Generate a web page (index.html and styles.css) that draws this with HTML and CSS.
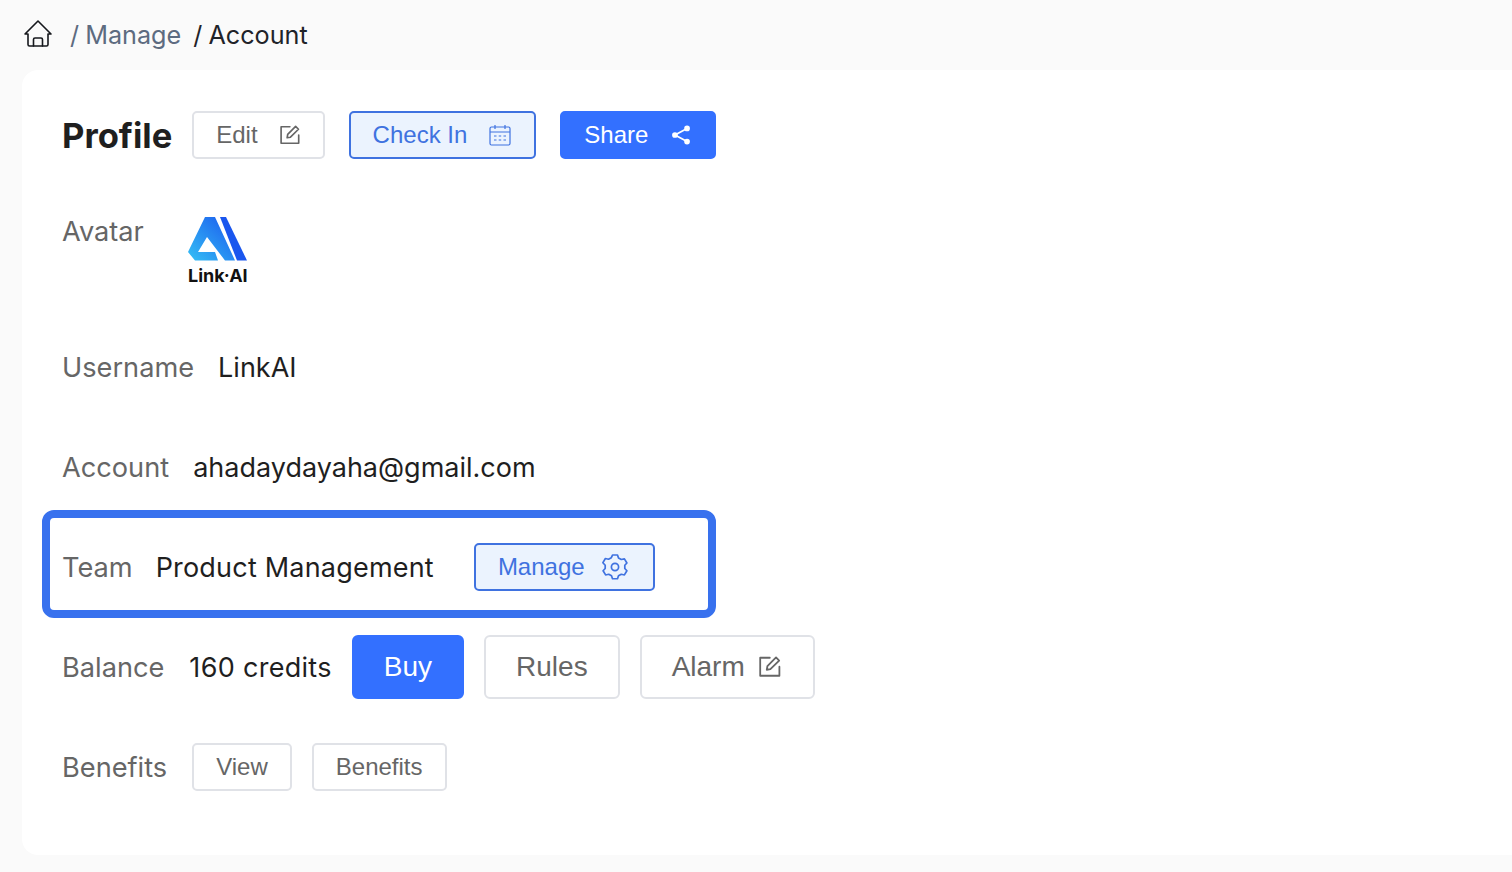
FILE: index.html
```html
<!DOCTYPE html>
<html lang="en">
<head>
  <meta charset="UTF-8">
  <title>Account</title>
  <link rel="stylesheet" href="styles.css">
</head>
<body>
  <!-- breadcrumb -->
  <nav class="crumbs">
    <svg class="home-icon" viewBox="0 0 28 28" fill="none" stroke="#16181d" stroke-width="1.6" stroke-linejoin="round" stroke-linecap="round">
      <path d="M1 14 14 1l13 13h-3v10.500a1.500 1.500 0 0 1-1.500 1.500h-17A1.500 1.500 0 0 1 4 24.500V14z"/>
      <path d="M9.500 26v-6.500a1.500 1.500 0 0 1 1.500-1.500h6a1.500 1.500 0 0 1 1.500 1.500V26"/>
    </svg>
    <span class="crumb">/ Manage</span>
    <span class="crumb current">/ Account</span>
  </nav>

  <main class="card">
    <div class="row head-row">
      <h1 class="title">Profile</h1>
      <button class="btn btn-line edit-btn">Edit
        <svg class="icon gap-lg" viewBox="1 0 20 20" fill="none" stroke="currentColor" stroke-width="1.5" stroke-linejoin="round" stroke-linecap="round">
          <path d="M10 2.500H2v15h16V10"/>
          <path d="M7.500 12.500 8 9.500 15.200 2.200l2.600 2.600-7.300 7.200z"/>
        </svg>
      </button>
      <button class="btn btn-soft checkin-btn">Check In
        <svg class="icon gap-lg" viewBox="0 0 22 22" fill="none" stroke="currentColor" stroke-width="1.2">
          <rect x="1" y="3" width="20" height="18" rx="1.5"/>
          <path d="M1 8h20M6 1v4M16 1v4"/>
          <path d="M5 12h2.500M9.700 12h2.500M14.500 12h2.500M5 16h2.500M9.700 16h2.500M14.500 16h2.500"/>
        </svg>
      </button>
      <button class="btn btn-solid">Share
        <svg class="icon gap-lg" viewBox="0 0 20 20" fill="currentColor" stroke="currentColor" stroke-width="1.6">
          <circle cx="15.500" cy="4" r="1.800"/>
          <circle cx="4.500" cy="10" r="1.800"/>
          <circle cx="15.500" cy="16" r="1.800"/>
          <path d="M15.500 4 4.500 10l11 6" fill="none"/>
        </svg>
      </button>
    </div>

    <div class="row avatar-row">
      <span class="label">Avatar</span>
      <div class="logo">
        <svg class="logo-mark" viewBox="0 0 60 44">
          <defs>
            <linearGradient id="lg" x1="0" y1="1" x2="1" y2="0">
              <stop offset="0" stop-color="#35c0f5"/>
              <stop offset="1" stop-color="#1a56ee"/>
            </linearGradient>
          </defs>
          <path fill="url(#lg)" d="M17 0h10l20 43.500H37L19 20 10 35h17l3 8.500H7L0 35z"/>
          <path fill="#1a56ee" d="M32 0h6l21 43.500H49z"/>
        </svg>
        <span class="logo-text">Link·AI</span>
      </div>
    </div>

    <div class="row">
      <span class="label">Username</span>
      <span class="value">LinkAI</span>
    </div>

    <div class="row">
      <span class="label">Account</span>
      <span class="value">ahadaydayaha@gmail.com</span>
    </div>

    <div class="row team-row">
      <span class="label">Team</span>
      <span class="value">Product Management</span>
      <button class="btn btn-soft team-btn">Manage
        <svg class="icon gap-sm" viewBox="0 0 26 26" fill="none" stroke="currentColor" stroke-width="1.700" stroke-linejoin="round">
          <path d="M10.500 1.800h5l1 3 2.800 1.600 3.100-.7 2.500 4.300-2.100 2.300v3.400l2.100 2.300-2.500 4.300-3.100-.7-2.800 1.600-1 3h-5l-1-3-2.800-1.600-3.100.7-2.500-4.300 2.100-2.300v-3.400L.9 9.700l2.500-4.300 3.100.7 2.800-1.600z" transform="translate(0 -.7) scale(1 .97)"/>
          <circle cx="13" cy="13" r="3.600"/>
        </svg>
      </button>
      <div class="tour-ring"></div>
    </div>

    <div class="row balance-row">
      <span class="label">Balance</span>
      <span class="value">160 credits</span>
      <button class="btn btn-solid btn-big buy">Buy</button>
      <button class="btn btn-line btn-big rules">Rules</button>
      <button class="btn btn-line btn-big alarm">Alarm
        <svg class="icon gap-xs" viewBox="1 .2 20 20" fill="none" stroke="currentColor" stroke-width="1.5" stroke-linejoin="round" stroke-linecap="round">
          <path d="M10 2.500H2v15h16V10"/>
          <path d="M7.500 12.500 8 9.500 15.200 2.200l2.600 2.600-7.300 7.200z"/>
        </svg>
      </button>
    </div>

    <div class="row benefits-row">
      <span class="label">Benefits</span>
      <button class="btn btn-line">View</button>
      <button class="btn btn-line">Benefits</button>
    </div>
  </main>
</body>
</html>
```

FILE: styles.css
```css
* { box-sizing: border-box; }
body {
  margin: 0;
  background: #fafafa;
  font-family: Inter, 'Liberation Sans', Arial, sans-serif;
  color: #1f1f1f;
  overflow: hidden;
}
.crumbs {
  height: 70px;
  padding-left: 24px;
  display: flex;
  align-items: center;
  font-size: 25.2px;
  color: #5d6b80;
}
.home-icon { width: 28px; height: 28px; margin: 0 18px 2px 0; }
.crumb { margin-right: 12px; word-spacing: -1px; }
.crumb.current { color: #1f2329; }

.card {
  margin-left: 22px;
  height: 785px;
  background: #fff;
  border-radius: 16px 0 0 16px;
  padding: 41px 0 0 40px;
}
.row {
  display: flex;
  align-items: center;
  height: 48px;
  margin-bottom: 52px;
  font-size: 27px;
}
.label { color: #666; margin-right: 24px; padding-bottom: 2px; font-size: 27.2px; }
.value { color: #1f1f1f; padding-bottom: 2px; }

.head-row { margin-bottom: 57px; }
.title { margin: 0 20px 0 0; font-size: 34.6px; font-weight: 700; color: #1f1f1f; }

.avatar-row { align-items: flex-start; height: 70px; margin-bottom: 58px; }
.avatar-row .label { margin-right: 43px; line-height: 32px; }
.logo { width: 62px; display: flex; flex-direction: column; align-items: center; padding-top: 1px; }
.logo-mark { width: 60px; height: 44px; }
.logo-text {
  font-size: 18px;
  font-weight: 700;
  color: #111;
  line-height: 30px;
  white-space: nowrap;
}

.btn {
  display: inline-flex;
  align-items: center;
  justify-content: center;
  height: 48px;
  padding: 0 22px;
  border-radius: 5px;
  font-family: 'Liberation Sans', Arial, sans-serif;
  font-size: 24px;
  background: #fff;
  cursor: pointer;
}
.btn + .btn { margin-left: 24px; }
.btn-line { border: 2px solid #e0e2e7; color: #666; }
.btn-soft { border: 2px solid #3f72e0; background: #ebf3fe; color: #3f72e0; }
.btn-solid { border: 2px solid #3370ff; background: #3370ff; color: #fff; }
.btn-big { height: 64px; font-size: 28px; border-radius: 6px; padding: 0 30px; }
.btn-big + .btn-big { margin-left: 20px; }
.edit-btn { padding-right: 21px; }
.checkin-btn { padding-right: 23px; }

.icon { width: 22px; height: 22px; flex: none; }
.gap-lg { margin-left: 22px; }
.gap-sm { margin-left: 17px; width: 26px; height: 26px; }
.gap-xs { margin-left: 14px; width: 24px; height: 24px; }

.team-row { position: relative; top: -1px; }
.team-row .label { margin-right: 23px; padding-bottom: 0; }
.team-row .value { letter-spacing: .2px; padding-bottom: 0; }
.team-btn { margin-left: 40px; width: 181px; padding: 0 0 0 22px; justify-content: flex-start; }
.tour-ring {
  position: absolute;
  left: -20px;
  top: -33px;
  width: 674px;
  height: 108px;
  border: 8px solid #3871ee;
  border-radius: 12px;
  pointer-events: none;
}

.balance-row { height: 64px; margin-bottom: 44px; margin-top: -9px; }
.balance-row .label { margin-right: 25px; padding-bottom: 0; }
.balance-row .value { margin-right: 20px; letter-spacing: .3px; padding-bottom: 0; }

.benefits-row .label { margin-right: 25px; padding-bottom: 0; }
.benefits-row .btn + .btn { margin-left: 20px; }
```
